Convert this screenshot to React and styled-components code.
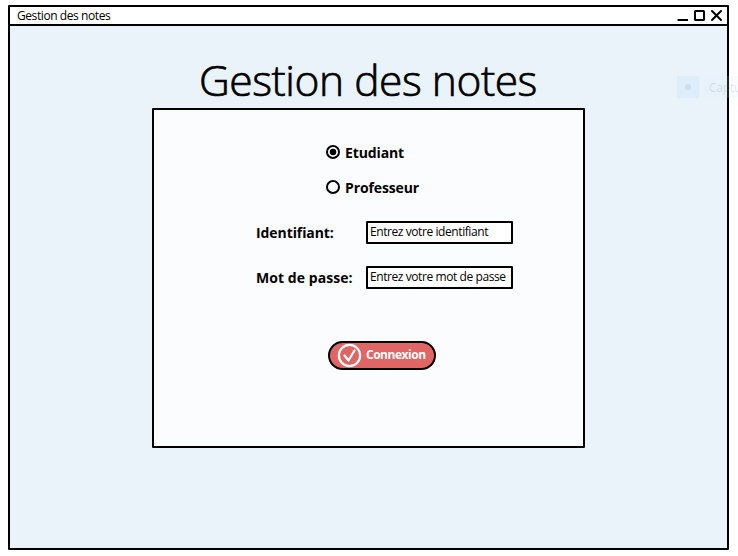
import React, { useState } from "react";
import styled, { createGlobalStyle } from "styled-components";

const GlobalStyle = createGlobalStyle`
  * { box-sizing: border-box; }
  body {
    margin: 0;
    background: #fff;
    color: #000;
    font-family: "Open Sans", "Noto Sans", sans-serif;
    overflow: hidden;
  }
`;

const Page = styled.div`
  position: relative;
  width: 738px;
  height: 556px;
  padding: 5px 9px 6px 8px;
  overflow: hidden;
`;

const Window = styled.main`
  display: flex;
  flex-direction: column;
  width: 721px;
  height: 545px;
  border: 2px solid #000;
  border-radius: 1px;
  background: #ebf3fa;
`;

const TitleBar = styled.header`
  display: flex;
  flex: none;
  align-items: center;
  justify-content: space-between;
  height: 19px;
  padding: 0 4px 0 7px;
  border-bottom: 2px solid #000;
  background: #fff;
`;

const Caption = styled.span`
  font-size: 12px;
  line-height: 17px;
  letter-spacing: -0.42px;
  white-space: nowrap;
`;

const Controls = styled.svg`
  display: block;
  flex: none;
`;

const Body = styled.div`
  display: flex;
  flex-direction: column;
  padding: 27px 0 0 142px;
`;

const Heading = styled.h1`
  height: 55px;
  margin: 0;
  padding-left: 47px;
  font-size: 42.5px;
  font-weight: 300;
  line-height: 54px;
  letter-spacing: -0.45px;
  white-space: nowrap;
  -webkit-text-stroke: 0.7px #000;
`;

const Card = styled.form`
  display: flex;
  flex-direction: column;
  width: 433px;
  height: 340px;
  padding: 33px 0 0 102px;
  border: 2px solid #000;
  border-radius: 1px;
  background: #fbfcfe;
`;

const Choices = styled.div`
  display: flex;
  flex-direction: column;
  gap: 15px;
  padding-left: 70px;
`;

const Choice = styled.label`
  display: flex;
  align-items: center;
  gap: 5px;
  height: 20px;
`;

const Radio = styled.input`
  flex: none;
  width: 14px;
  height: 14px;
  margin: 0 0 2px;
  appearance: none;
  border: 2px solid #000;
  border-radius: 50%;
  background: ${(p) => (p.checked ? "radial-gradient(circle, #000 3px, #fff 3.7px)" : "#fff")};
`;

const Label = styled.span`
  font-size: 14px;
  font-weight: 700;
  line-height: 20px;
  letter-spacing: ${(p) => p.$spacing};
  white-space: nowrap;
`;

const Fields = styled.div`
  display: flex;
  flex-direction: column;
  gap: 22px;
  margin-top: 23px;
`;

const Field = styled.label`
  display: grid;
  grid-template-columns: 110px 147px;
  align-items: center;
  height: 23px;
`;

const Input = styled.input`
  width: 147px;
  height: 23px;
  padding: 0 0 2px 2px;
  border: 2px solid #000;
  border-radius: 1px;
  background: #fff;
  font: 12px/17px "Open Sans", "Noto Sans", sans-serif;
  letter-spacing: -0.42px;
  outline: none;
  &::placeholder { color: #000; opacity: 1; }
`;

const Submit = styled.button`
  display: flex;
  align-items: center;
  gap: 4px;
  width: 108px;
  height: 29px;
  margin: 52px 0 0 72px;
  padding: 0 0 0 7px;
  border: 2px solid #000;
  border-radius: 15px;
  background: #e06666;
  color: #fff;
  font: 700 12px/17px "Open Sans", "Noto Sans", sans-serif;
  letter-spacing: -0.48px;
`;

const SubmitText = styled.span`
  padding-bottom: 2px;
`;

const CaptureHint = styled.div`
  position: absolute;
  left: 677px;
  top: 76px;
  display: flex;
  align-items: center;
  width: 61px;
  height: 22px;
  overflow: hidden;
  background: linear-gradient(90deg, rgba(205, 230, 249, 0.45) 22px, rgba(215, 236, 251, 0.15) 22px);
  color: rgba(80, 80, 80, 0.15);
  font-size: 12px;
  letter-spacing: -0.2px;
  pointer-events: none;
`;

const Dot = styled.i`
  flex: none;
  width: 6px;
  height: 6px;
  margin: 0 18px 0 8px;
  border-radius: 50%;
  background: rgba(130, 130, 130, 0.15);
`;

const fields = [
  { label: "Identifiant:", hint: "Entrez votre identifiant", type: "text", labelSpacing: "-0.08px" },
  { label: "Mot de passe:", hint: "Entrez votre mot de passe", type: "password", labelSpacing: "0.06px" },
];

export default function App() {
  const [role, setRole] = useState("Etudiant");
  return (
    <Page>
      <GlobalStyle />
      <Window>
        <TitleBar>
          <Caption>Gestion des notes</Caption>
          <Controls width="46" height="17" viewBox="0 0 46 17" fill="none" stroke="#000" strokeWidth="2">
            <path d="M0.5 13H11" />
            <rect x="18" y="4" width="9" height="9" rx="0.5" />
            <path d="M35 4L44 13M44 4L35 13" strokeLinecap="round" />
          </Controls>
        </TitleBar>
        <Body>
          <Heading>Gestion des notes</Heading>
          <Card onSubmit={(e) => e.preventDefault()}>
            <Choices>
              {["Etudiant", "Professeur"].map((name) => (
                <Choice key={name}>
                  <Radio type="radio" name="role" checked={role === name} onChange={() => setRole(name)} />
                  <Label $spacing="-0.12px">{name}</Label>
                </Choice>
              ))}
            </Choices>
            <Fields>
              {fields.map((f) => (
                <Field key={f.label}>
                  <Label $spacing={f.labelSpacing}>{f.label}</Label>
                  <Input type={f.type} placeholder={f.hint} />
                </Field>
              ))}
            </Fields>
            <Submit type="submit">
              <svg width="25" height="25" viewBox="0 0 25 25" fill="none" stroke="#fff" strokeWidth="2.2" strokeLinecap="round" strokeLinejoin="round">
                <circle cx="12.5" cy="12.5" r="10.6" />
                <path d="M7.5 12.5L11.5 17.5L17.5 7.5" />
              </svg>
              <SubmitText>Connexion</SubmitText>
            </Submit>
          </Card>
        </Body>
      </Window>
      <CaptureHint><Dot />Captu</CaptureHint>
    </Page>
  );
}
